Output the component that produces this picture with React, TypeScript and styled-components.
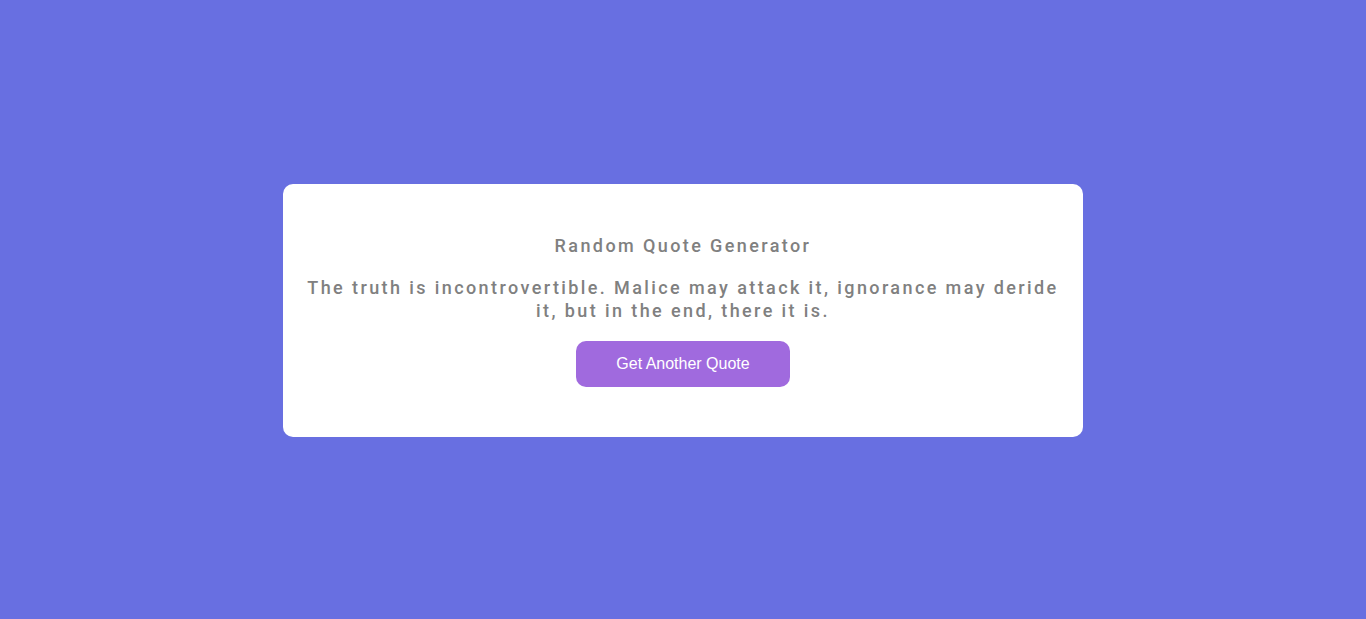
import React from "react";
import styled, { createGlobalStyle } from "styled-components";

const Global = createGlobalStyle`
  html, body { margin: 0; padding: 0; }
  body { background: #686fe1; font-family: Roboto, "Liberation Sans", sans-serif; }
`;

const Page = styled.main`
  min-height: 619px;
  box-sizing: border-box;
  padding-top: 1px;
  display: flex;
  align-items: center;
  justify-content: center;
`;

const Card = styled.section`
  width: 800px;
  box-sizing: border-box;
  background: #ffffff;
  border-radius: 10px;
  padding: 51px 20px 50px;
  display: flex;
  flex-direction: column;
  align-items: center;
`;

const Title = styled.h1`
  margin: 0 0 20px;
  font-family: Roboto, sans-serif;
  font-size: 18px;
  line-height: 21px;
  font-weight: 500;
  letter-spacing: 2.4px;
  color: #808080;
  text-align: center;
`;

const Quote = styled.p`
  margin: 0 0 19px;
  font-family: Roboto, sans-serif;
  font-size: 18px;
  line-height: 23px;
  font-weight: 500;
  letter-spacing: 2.4px;
  color: #808080;
  text-align: center;
`;

const Button = styled.button`
  width: 214px;
  height: 46px;
  border: none;
  border-radius: 10px;
  background: #a06ade;
  color: #ffffff;
  font-family: "Liberation Sans", Arial, sans-serif;
  font-size: 16px;
  cursor: pointer;
`;

export default function App() {
  return (
    <>
      <Global />
      <Page>
        <Card>
          <Title>Random Quote Generator</Title>
          <Quote>
            The truth is incontrovertible. Malice may attack it, ignorance may deride it, but in the end, there it is.
          </Quote>
          <Button>Get Another Quote</Button>
        </Card>
      </Page>
    </>
  );
}
